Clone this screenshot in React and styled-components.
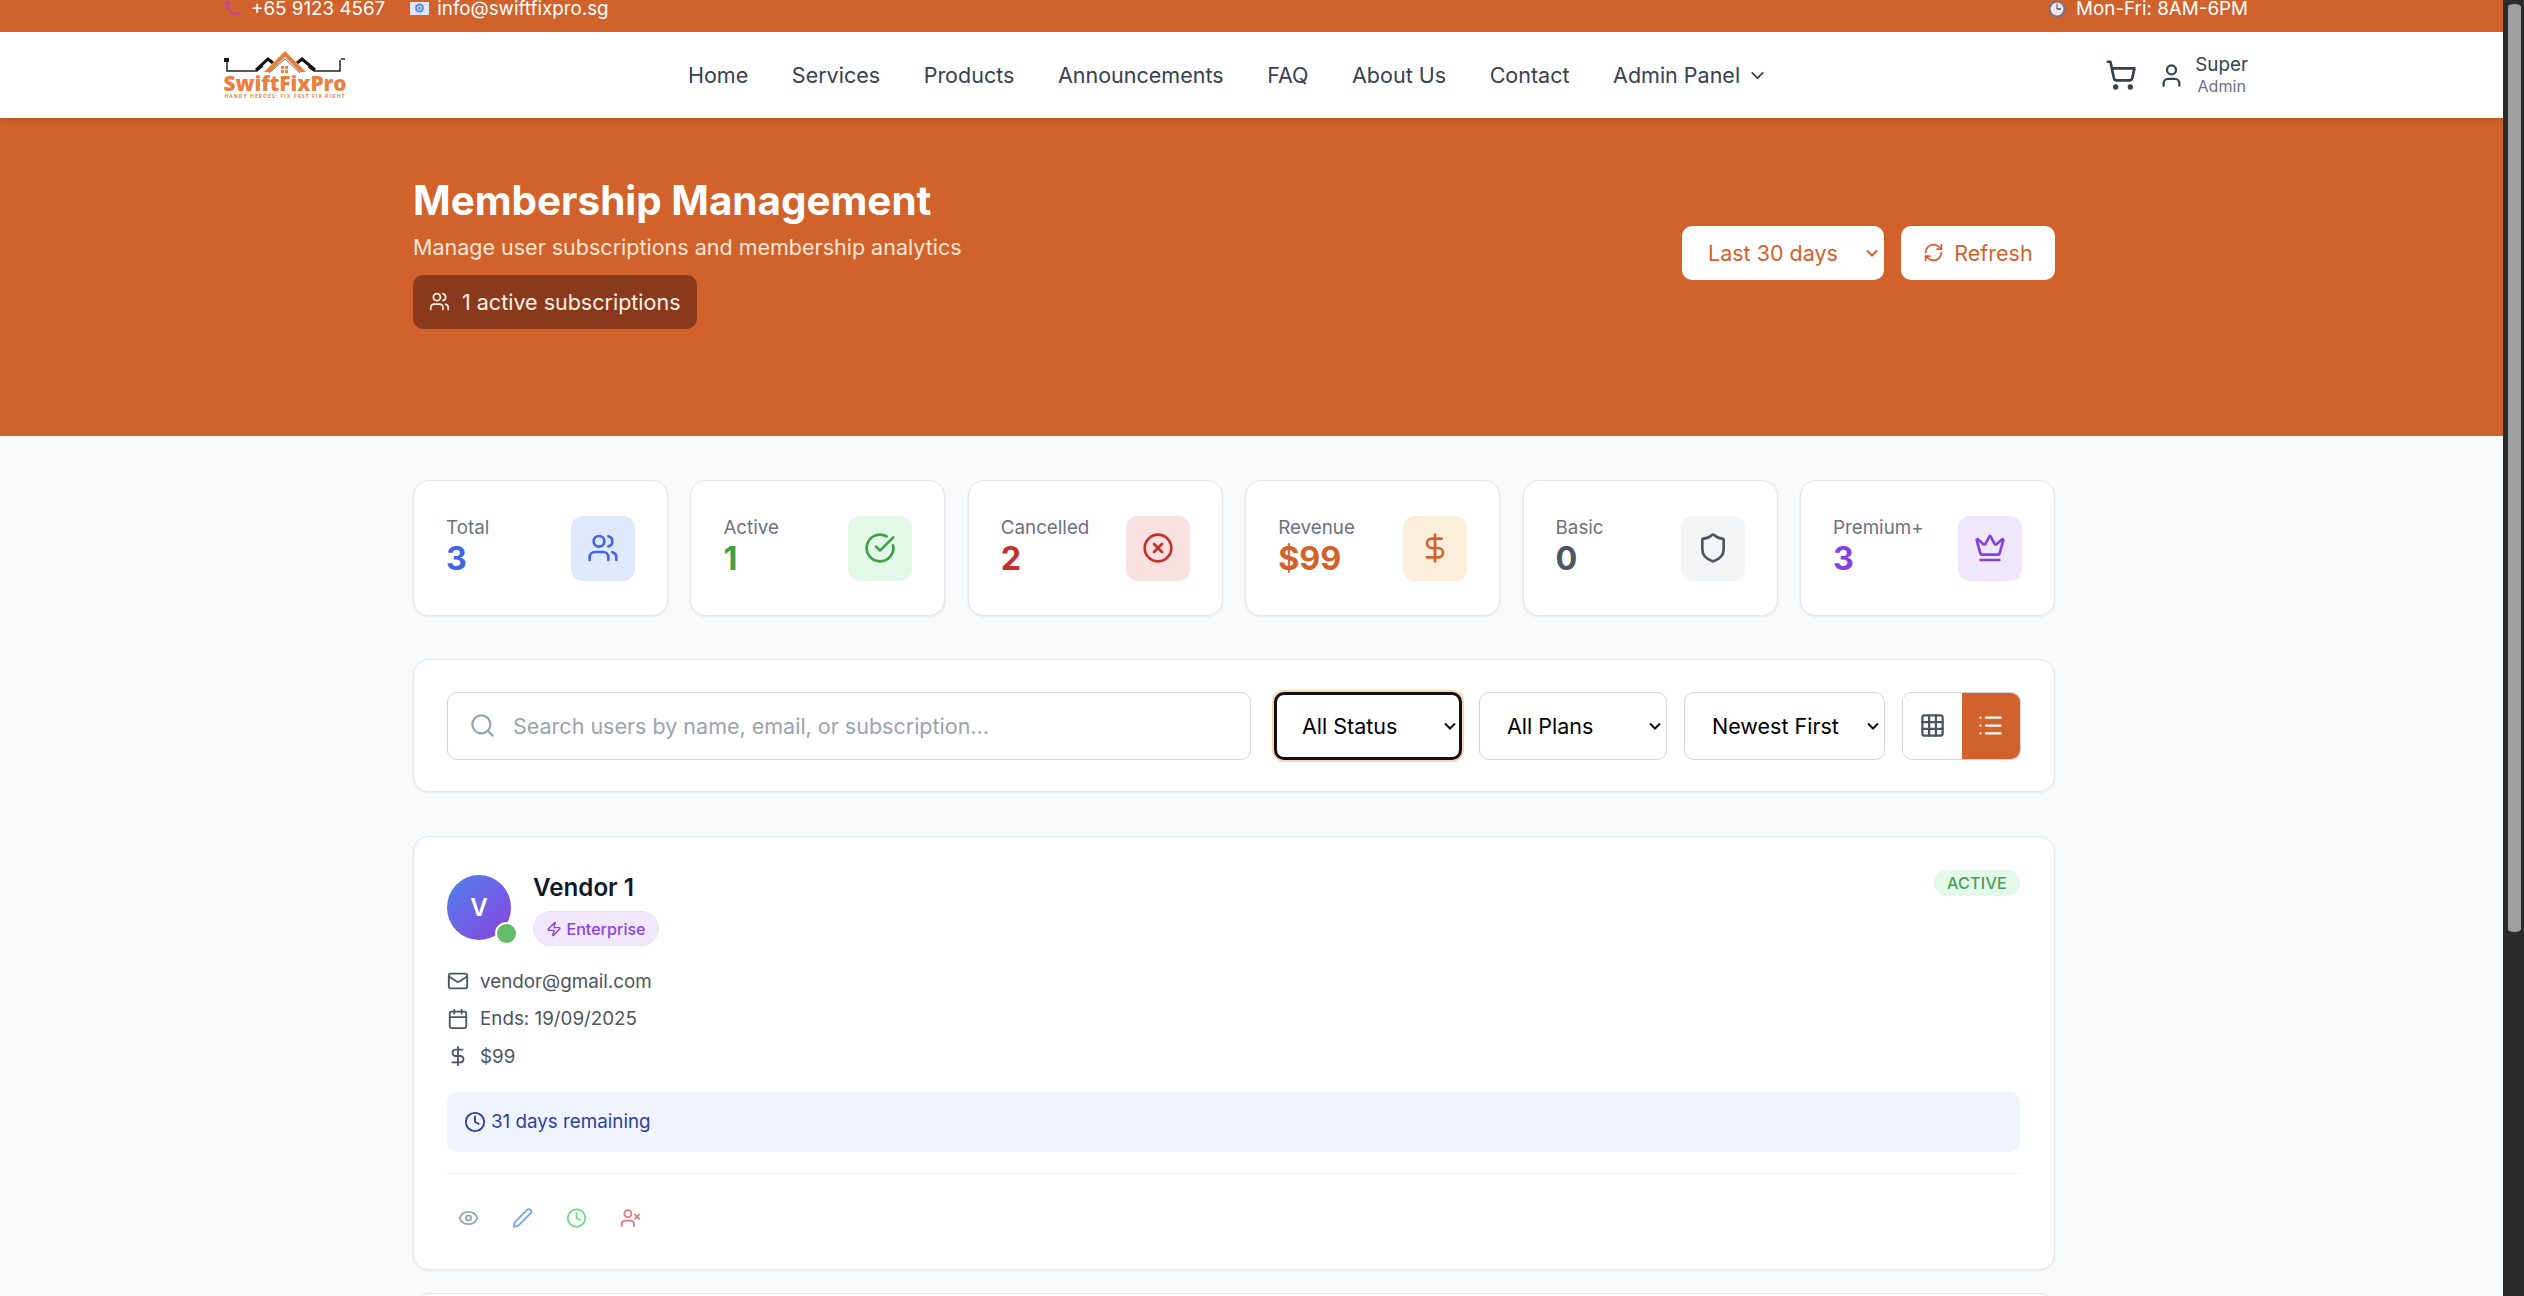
import React from 'react';
import styled, { createGlobalStyle } from 'styled-components';
import { Users, CircleCheckBig, CircleX, DollarSign, Shield, Crown, Search, Grid3x3, List, Mail, Calendar, Zap, Clock, Eye, Pen, UserX, RefreshCw, ShoppingCart, User, ChevronDown } from 'lucide-react';

const Global = createGlobalStyle`
  html, body { margin: 0; padding: 0; background: #f9fafb; }
  * { box-sizing: border-box; }
  body { font-family: Inter, "Liberation Sans", sans-serif; color: #111827; }
`;
const Shell = styled.div`display: flex; height: 100vh; overflow: hidden;`;
const Page = styled.main`flex: 1; min-width: 0; height: 100vh; overflow: hidden; background: #f9fafb;`;
const Track = styled.aside`width: 21px; flex: none; background: #2b2b2b; padding: 4px 3px 0 5px;`;
const Thumb = styled.div`height: 928px; background: #9f9f9f; border-radius: 7px / 3px;`;

const TopBar = styled.div`height: 32px; background: #d2622c; color: #fff; font-size: 18.8px; line-height: 24px; display: flex; align-items: flex-start; justify-content: space-between; padding: 0 255px 0 223px; overflow: hidden;`;
const TopGroup = styled.div`display: flex; align-items: center; gap: ${p => p.$gap || 10}px; height: 18px; margin-right: ${p => p.$mr || 0}px;`;
const TopLeft = styled.div`display: flex;`;

const NavBar = styled.header`height: 86px; background: #fff; display: flex; align-items: center; padding: 0 255px 0 223px; box-shadow: 0 3px 5px rgba(0,0,0,.12); position: relative;`;
const Logo = styled.div`width: 124px; height: 50px; display: flex; flex-direction: column; align-items: center; flex: none; color: #e8803f;`;
const LogoName = styled.span`font-family: "Open Sans", sans-serif; font-weight: 800; font-size: 20.8px; line-height: 17px; margin-top: -1px; white-space: nowrap;`;
const LogoTag = styled.span`font-family: "Open Sans", sans-serif; font-weight: 700; font-size: 5px; letter-spacing: 1.03px; line-height: 7px; white-space: nowrap; margin-top: 1px;`;
const Links = styled.nav`display: flex; align-items: center; gap: 43.6px; margin-left: 341px; font-size: 21.5px; color: #374151;`;
const Link = styled.a`display: flex; align-items: center; gap: 7px; white-space: nowrap;`;
const UserArea = styled.div`margin-left: auto; display: flex; align-items: center; color: #374151;`;
const CartIcon = styled(ShoppingCart)`margin-right: 21px;`;
const UserIcon = styled(User)`margin-right: 10px;`;
const UserText = styled.div`display: flex; flex-direction: column; align-items: center;`;
const UserName = styled.span`font-size: 18.8px; line-height: 23px;`;
const UserRole = styled.span`font-size: 16.1px; line-height: 21px; color: #6b7280;`;

const Hero = styled.section`height: 318px; background: #d2622c; padding: 59px 448px 109px 413px; display: flex; align-items: center; justify-content: space-between;`;
const HeroLeft = styled.div`display: flex; flex-direction: column; align-items: flex-start;`;
const Title = styled.h1`margin: 0; font-size: 40.4px; line-height: 50px; font-weight: 700; color: #fff;`;
const Sub = styled.p`margin: 6px 0 13px; font-size: 21.5px; line-height: 30px; color: #fce7d6;`;
const ActiveBadge = styled.div`display: flex; align-items: center; gap: 12px; height: 54px; width: 284px; padding: 0 16px; background: #8a3a1c; border-radius: 10px; color: #fdf0e3; font-size: 21.5px;`;
const HeroActions = styled.div`display: flex; gap: 17px; margin-top: 1px;`;
const SelectWrap = styled.div`position: relative; flex: none; margin-left: ${p => p.$ml || 0}px; color: ${p => p.$c || '#111'};`;
const Chevron = styled.svg`position: absolute; right: 6px; top: 50%; margin-top: -4px; width: 12px; height: 8px; pointer-events: none;`;
const HeroSelect = styled.select`appearance: none; display: block; width: 202px; height: 54px; border: 0; border-radius: 10px; background: #fff; color: #d2622c; font: 21.5px Inter, sans-serif; padding: 0 16px 0 26px;`;
const RefreshBtn = styled.button`width: 154px; height: 54px; border: 0; border-radius: 10px; background: #fff; color: #d2622c; font: 21.5px Inter, sans-serif; display: flex; align-items: center; justify-content: center; gap: 10px; padding: 0;`;

const Content = styled.div`padding: 44px 448px 0 413px;`;
const Stats = styled.div`display: grid; grid-template-columns: repeat(6, 255px); justify-content: space-between;`;
const Card = styled.div`background: #fff; border: 1px solid #e5e7eb; border-radius: 16px; box-shadow: 0 1px 3px rgba(0,0,0,.08);`;
const StatCard = styled(Card)`height: 136px; padding: 0 32px; display: flex; align-items: center; justify-content: space-between;`;
const StatLabel = styled.div`font-size: 18.8px; line-height: 24px; color: #6b7280; margin-top: -2px;`;
const StatValue = styled.div`font-size: 32.3px; line-height: 38px; font-weight: 700; color: ${p => p.$c};`;
const StatIcon = styled.div`width: 64px; height: 65px; border-radius: 12px; display: flex; align-items: center; justify-content: center; background: ${p => p.$bg}; color: ${p => p.$c};`;

const Filters = styled(Card)`margin-top: 43px; height: 133px; padding: 0 34px 0 33px; display: flex; align-items: center; gap: 17px;`;
const SearchBox = styled.div`width: 804px; height: 68px; border: 1px solid #d1d5db; border-radius: 10px; display: flex; align-items: center; gap: 17px; padding: 0 21px; color: #9ca3af; font-size: 21.5px; flex: none;`;
const Select = styled.select`appearance: none; display: block; height: 68px; width: ${p => p.$w}px; background: #fff; border: ${p => p.$focus ? '3px solid #111' : '1px solid #d1d5db'}; border-radius: 10px; color: #000; font: 21.5px Inter, sans-serif; padding: 0 8px 0 ${p => p.$focus ? 25 : 27}px; box-shadow: ${p => p.$focus ? '0 0 0 2px #fbd3b5' : 'none'}; margin: 0;`;
const Toggle = styled.div`display: flex; width: 119px; height: 68px; flex: none; border: 1px solid #d1d5db; border-radius: 10px; overflow: hidden;`;
const ToggleBtn = styled.div`flex: 1; display: flex; align-items: center; justify-content: center; color: ${p => p.$on ? '#fff' : '#4b5563'}; background: ${p => p.$on ? '#d2622c' : '#fff'};`;

const MemberCard = styled(Card)`margin-top: 44px; height: 434px; padding: 33px 34px 0 33px; position: relative;`;
const NextCard = styled(Card)`margin-top: 23px; height: 100px;`;
const Status = styled.span`position: absolute; top: 33px; right: 34px; height: 26px; width: 86px; display: flex; align-items: center; justify-content: center; border-radius: 13px; background: #e2f8e8; color: #4a9d56; font-size: 16.1px; font-weight: 500; letter-spacing: .2px;`;
const Head = styled.div`display: flex; gap: 22px;`;
const AvatarWrap = styled.div`position: relative; width: 64px; height: 65px; margin-top: 5px; flex: none;`;
const Avatar = styled.div`width: 64px; height: 65px; border-radius: 50%; background: linear-gradient(135deg, #4f82ee, #8a42dc); color: #fff; font-size: 24px; font-weight: 600; display: flex; align-items: center; justify-content: center;`;
const Dot = styled.span`position: absolute; right: -7px; bottom: -5px; width: 23px; height: 23px; border-radius: 50%; background: #66bb6a; border: 2px solid #fff;`;
const Name = styled.div`font-size: 24.2px; line-height: 32px; font-weight: 600; color: #111827; margin-top: 2px;`;
const Plan = styled.span`display: inline-flex; align-items: center; gap: 4px; height: 35px; width: 126px; justify-content: center; margin-top: 7px; border-radius: 18px; background: #f1e8fd; border: 1px solid #e9e3f5; color: #8b44e0; font-size: 16.1px; font-weight: 500;`;
const Rows = styled.div`margin-top: 23px; display: flex; flex-direction: column; gap: 13px;`;
const Row = styled.div`display: flex; align-items: center; gap: 11px; height: 24.5px; color: #4b5563; font-size: 18.8px;`;
const Remain = styled.div`margin-top: 23px; height: 60px; background: #eff4fe; border-radius: 10px; display: flex; align-items: center; gap: 5px; padding: 0 17px; color: #2f3f9e; font-size: 18.8px;`;
const Actions = styled.div`margin-top: 21px; border-top: 1px solid #f3f4f6; padding: 33px 0 0 11px; display: flex; gap: 33px;`;
const ActionIcon = styled.span`display: flex; width: 21px; color: ${p => p.$c};`;

const ChevronMark = () => (
  <Chevron viewBox="0 0 12 8"><path d="M1 1.500l5 5 5-5" fill="none" stroke="currentColor" strokeWidth="2" /></Chevron>
);
const PhoneEmoji = () => (
  <svg width="18" height="18" viewBox="0 0 18 16"><path d="M1 0c0 6 6 13 13 15 2 .5 3.500-1 3.500-2.500l-3.500-2-2 1.500C9 11 6 7 6 4.500L8 3 6.500 0z" fill="#c9468f"/></svg>
);
const MailEmoji = () => (
  <svg width="19" height="14" viewBox="0 0 19 14"><rect x="0" y="0" width="19" height="13" fill="#dfe3f3"/><circle cx="9.500" cy="6" r="4.500" fill="#5f8ee0"/><circle cx="9.500" cy="6" r="2" fill="none" stroke="#dfe8fa"/></svg>
);
const ClockEmoji = () => (
  <svg width="18" height="17" viewBox="0 0 18 17"><circle cx="9" cy="8" r="8.500" fill="#70727c"/><circle cx="9" cy="8" r="6.500" fill="#e9e7ee"/><path d="M9 8V2.500" stroke="#c8405a" strokeWidth="1.200"/><path d="M9 8h4" stroke="#333" strokeWidth="1.200"/></svg>
);
const LogoMark = () => (
  <svg width="124" height="26" viewBox="0 0 124 26" style={{ flex: 'none' }}>
    <path d="M1 8h5v4H1z" fill="#111" />
    <path d="M4 11v10h30l6-5M85 17l6 4h26V10M118 9h4" fill="none" stroke="#222" strokeWidth="1.500"/>
    <path d="M33 20l12-11 5 4M92 20 79 9l-5 4" fill="none" stroke="#111" strokeWidth="3"/>
    <path d="M41 22 62 1l21 21h-6L62 7 47 22z" fill="#e8803f"/>
    <path d="M46 23 62 9l15 14" fill="none" stroke="#333" strokeWidth=".7"/>
    <path d="M58 16h3v3h-3zM62 16h3v3h-3zM58 20h3v3h-3zM62 20h3v3h-3z" fill="#e8803f"/>
  </svg>
);

const links = ['Home', 'Services', 'Products', 'Announcements', 'FAQ', 'About Us', 'Contact'];
const stats = [
  { label: 'Total', value: '3', c: '#4264e4', bg: '#dfe9fd', ic: '#4264e4', Icon: Users },
  { label: 'Active', value: '1', c: '#43a047', bg: '#e2f8e8', ic: '#43a047', Icon: CircleCheckBig },
  { label: 'Cancelled', value: '2', c: '#c62f2a', bg: '#fae1e1', ic: '#c62f2a', Icon: CircleX },
  { label: 'Revenue', value: '$99', c: '#d2622c', bg: '#fbeedb', ic: '#d2622c', Icon: DollarSign },
  { label: 'Basic', value: '0', c: '#4b5563', bg: '#f3f4f6', ic: '#4b5563', Icon: Shield },
  { label: 'Premium+', value: '3', c: '#8341e0', bg: '#f0e7fd', ic: '#8341e0', Icon: Crown },
];

export default function App() {
  return (
    <Shell>
      <Global />
      <Page>
        <TopBar>
          <TopLeft>
            <TopGroup $mr={25}><PhoneEmoji /><span>+65 9123 4567</span></TopGroup>
            <TopGroup $gap={8}><MailEmoji /><span>info@swiftfixpro.sg</span></TopGroup>
          </TopLeft>
          <TopGroup><ClockEmoji /><span>Mon-Fri: 8AM-6PM</span></TopGroup>
        </TopBar>
        <NavBar>
          <Logo><LogoMark /><LogoName>SwiftFixPro</LogoName><LogoTag>HANDY HEROES: FIX FAST FIX RIGHT</LogoTag></Logo>
          <Links>
            {links.map(l => <Link key={l}>{l}</Link>)}
            <Link>Admin Panel <ChevronDown size={21} /></Link>
          </Links>
          <UserArea>
            <CartIcon size={32} />
            <UserIcon size={27} />
            <UserText><UserName>Super</UserName><UserRole>Admin</UserRole></UserText>
          </UserArea>
        </NavBar>
        <Hero>
          <HeroLeft>
            <Title>Membership Management</Title>
            <Sub>Manage user subscriptions and membership analytics</Sub>
            <ActiveBadge><Users size={21} />1 active subscriptions</ActiveBadge>
          </HeroLeft>
          <HeroActions>
            <SelectWrap $c="#d2622c">
              <HeroSelect defaultValue="30"><option value="30">Last 30 days</option></HeroSelect>
              <ChevronMark />
            </SelectWrap>
            <RefreshBtn><RefreshCw size={21} />Refresh</RefreshBtn>
          </HeroActions>
        </Hero>
        <Content>
          <Stats>
            {stats.map(({ label, value, c, bg, ic, Icon }) => (
              <StatCard key={label}>
                <div><StatLabel>{label}</StatLabel><StatValue $c={c}>{value}</StatValue></div>
                <StatIcon $bg={bg} $c={ic}><Icon size={32} /></StatIcon>
              </StatCard>
            ))}
          </Stats>
          <Filters>
            <SearchBox><Search size={27} /><span>Search users by name, email, or subscription...</span></SearchBox>
            <SelectWrap $ml={6}><Select $w={188} $focus><option>All Status</option></Select><ChevronMark /></SelectWrap>
            <SelectWrap><Select $w={188}><option>All Plans</option></Select><ChevronMark /></SelectWrap>
            <SelectWrap><Select $w={201}><option>Newest First</option></Select><ChevronMark /></SelectWrap>
            <Toggle>
              <ToggleBtn><Grid3x3 size={27} /></ToggleBtn>
              <ToggleBtn $on><List size={27} /></ToggleBtn>
            </Toggle>
          </Filters>
          <MemberCard>
            <Status>ACTIVE</Status>
            <Head>
              <AvatarWrap><Avatar>V</Avatar><Dot /></AvatarWrap>
              <div>
                <Name>Vendor 1</Name>
                <Plan><Zap size={16} />Enterprise</Plan>
              </div>
            </Head>
            <Rows>
              <Row><Mail size={22} />vendor@gmail.com</Row>
              <Row><Calendar size={22} />Ends: 19/09/2025</Row>
              <Row><DollarSign size={22} />$99</Row>
            </Rows>
            <Remain><Clock size={22} />31 days remaining</Remain>
            <Actions>
              <ActionIcon $c="#9ca3af"><Eye size={22} /></ActionIcon>
              <ActionIcon $c="#74a0f5"><Pen size={22} /></ActionIcon>
              <ActionIcon $c="#6fd884"><Clock size={22} /></ActionIcon>
              <ActionIcon $c="#e57373"><UserX size={22} /></ActionIcon>
            </Actions>
          </MemberCard>
          <NextCard />
        </Content>
      </Page>
      <Track><Thumb /></Track>
    </Shell>
  );
}
